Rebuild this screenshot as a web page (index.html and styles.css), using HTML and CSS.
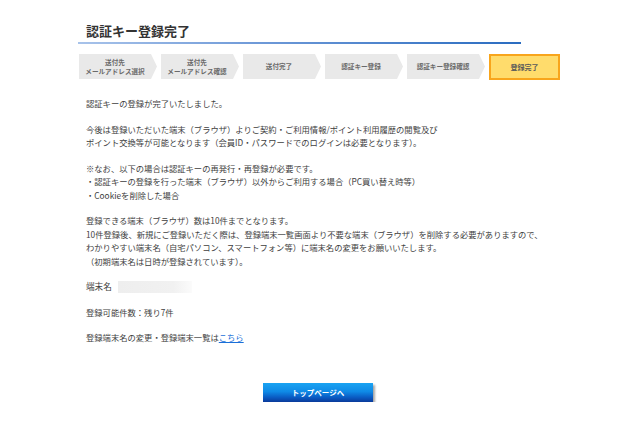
FILE: index.html
```html
<!DOCTYPE html>
<html lang="ja">
<head>
<meta charset="utf-8">
<title>認証キー登録完了</title>
<link rel="stylesheet" href="styles.css">
</head>
<body>
<div class="page">
  <h1 class="title">認証キー登録完了</h1>
  <div class="rule"></div>
  <ol class="steps">
    <li class="step"><span>送付先<br>メールアドレス選択</span></li>
    <li class="step"><span>送付先<br>メールアドレス確認</span></li>
    <li class="step"><span>送付完了</span></li>
    <li class="step"><span>認証キー登録</span></li>
    <li class="step"><span>認証キー登録確認</span></li>
    <li class="step active"><span>登録完了</span></li>
  </ol>
  <div class="content">
    <p>認証キーの登録が完了いたしました。</p>
    <p>今後は登録いただいた端末（ブラウザ）よりご契約・ご利用情報/ポイント利用履歴の閲覧及び<br>ポイント交換等が可能となります（会員ID・パスワードでのログインは必要となります）。</p>
    <p>※なお、以下の場合は認証キーの再発行・再登録が必要です。<br>・認証キーの登録を行った端末（ブラウザ）以外からご利用する場合（PC買い替え時等）<br>・Cookieを削除した場合</p>
    <p>登録できる端末（ブラウザ）数は10件までとなります。<br>10件登録後、新規にご登録いただく際は、登録端末一覧画面より不要な端末（ブラウザ）を削除する必要がありますので、<br>わかりやすい端末名（自宅パソコン、スマートフォン等）に端末名の変更をお願いいたします。<br>（初期端末名は日時が登録されています）。</p>
    <p class="device"><span class="device-label">端末名</span><span class="device-value"></span></p>
    <p>登録可能件数：残り7件</p>
    <p>登録端末名の変更・登録端末一覧は<a href="#" class="link">こちら</a></p>
  </div>
  <div class="actions">
    <a href="#" class="btn">トップページへ</a>
  </div>
</div>
</body>
</html>
```
FILE: styles.css
```css
html, body {
  margin: 0;
  padding: 0;
  background: #ffffff;
}
body {
  font-family: "Noto Sans CJK JP", "Liberation Sans", sans-serif;
  color: #333333;
}
.page {
  width: 482px;
  margin-left: 78px;
  padding-top: 22px;
}
.title {
  margin: 0;
  padding: 0 0 2px 8px;
  font-size: 13px;
  line-height: 18px;
  font-weight: bold;
  color: #333333;
}
.rule {
  width: 443px;
  height: 2px;
  background: linear-gradient(to right, #a8c3ea, #6f9ad8 40%, #2a6cc0);
}
.steps {
  list-style: none;
  margin: 10px 0 0 1px;
  padding: 0;
  display: flex;
  gap: 4px;
  align-items: flex-start;
}
.step {
  width: 78px;
  height: 25px;
  box-sizing: border-box;
  padding-right: 6px;
  background: #e9e9e9;
  clip-path: polygon(0 0, calc(100% - 6px) 0, 100% 50%, calc(100% - 6px) 100%, 0 100%);
  display: flex;
  align-items: center;
  justify-content: center;
  text-align: center;
  font-size: 6.6px;
  line-height: 9px;
  font-weight: bold;
  color: #6a6a6a;
}
.step.active {
  width: 71px;
  height: 26px;
  padding-right: 0;
  clip-path: none;
  background: #ffdc6c;
  border: 2px solid #f8a51c;
  color: #5a5a5a;
  font-size: 7px;
}
.content {
  padding-left: 8px;
  margin-top: 17px;
  font-size: 8.3px;
  line-height: 13.5px;
  color: #3e3e3e;
}
.content p {
  margin: 0 0 12px 0;
}
.device {
  display: flex;
  align-items: center;
}
.device-label {
  margin-right: 6px;
  font-size: 8.6px;
}
.device-value {
  display: inline-block;
  width: 74px;
  height: 12px;
  background: linear-gradient(to right, #eeeeee 0%, #f1f1f1 75%, #fbfbfb 100%);
}
.link {
  color: #1a6fd8;
  text-decoration: underline;
}
.actions {
  display: flex;
  justify-content: center;
  margin-top: 38px;
}
.btn {
  display: block;
  width: 110px;
  height: 19px;
  line-height: 19px;
  text-align: center;
  text-decoration: none;
  color: #ffffff;
  font-size: 7.5px;
  font-weight: bold;
  background: linear-gradient(to bottom, #1aa3f2 0%, #0f8ae6 45%, #0a5cc4 75%, #0a3a9a 100%);
  box-shadow: 2px 2px 2px rgba(0, 0, 0, 0.35);
  margin-right: 2px;
}
```
